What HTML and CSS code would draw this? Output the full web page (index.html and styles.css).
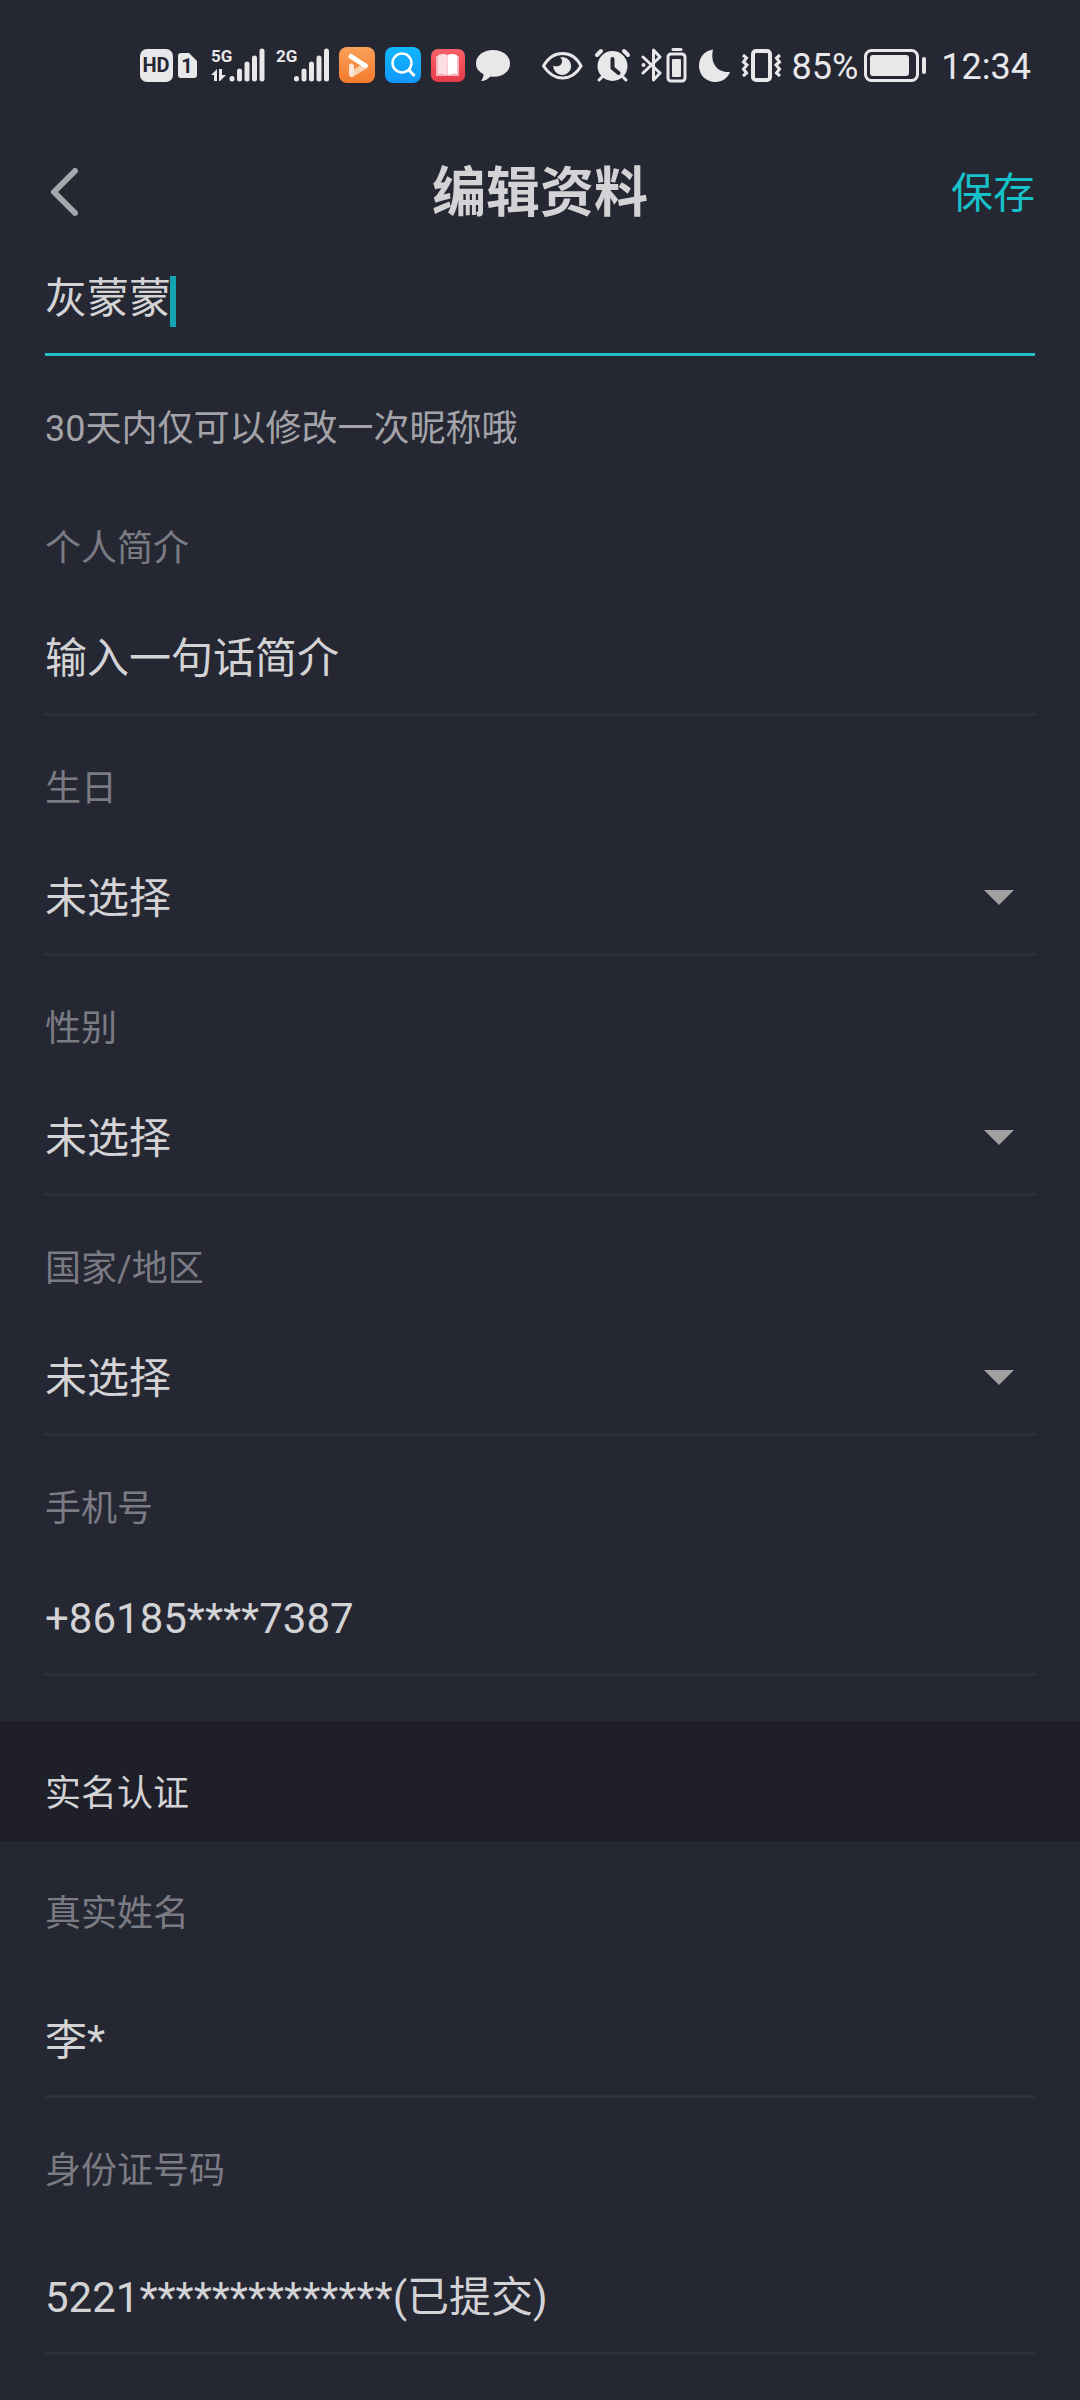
FILE: index.html
```
<!DOCTYPE html>
<html lang="zh-CN">
<head>
    <meta charset="UTF-8">
    <meta name="viewport" content="width=device-width, initial-scale=1.0">
    <title>编辑资料</title>
    <link rel="stylesheet" href="styles.css">
</head>
<body>

    <!-- 状态栏 -->
    <div class="status-bar">
        <div class="status-group">
            <svg width="58" height="36" viewBox="0 0 58 36">
                <rect x="0" y="2" width="33" height="33" rx="7" fill="#e8e8ea"/>
                <text class="status-hd" x="16" y="25" text-anchor="middle">HD</text>
                <path d="M41 6h8l8 8v14a3 3 0 0 1-3 3H41a3 3 0 0 1-3-3V9a3 3 0 0 1 3-3z" fill="#e8e8ea"/>
                <text class="status-hd" x="47" y="26" text-anchor="middle">1</text>
            </svg>
            <svg width="58" height="36" viewBox="0 0 58 36" fill="#e8e8ea">
                <text class="status-net" x="3" y="15">5G</text>
                <path d="M3 28l6-6v12H6v-6zM11 22h3v6h4l-6 6h-1z"/>
                <g stroke="#e8e8ea" stroke-width="5" stroke-linecap="round">
                    <path d="M24 31.500v.5M31.500 24v8M39 17v15M46.500 11v21M54 4v28"/>
                </g>
            </svg>
            <svg width="53" height="36" viewBox="0 0 53 36" fill="#e8e8ea">
                <text class="status-net" x="0" y="15">2G</text>
                <g stroke="#e8e8ea" stroke-width="5" stroke-linecap="round">
                    <path d="M20.500 31.500v.5M28 24v8M35.500 17v15M43 11v21M50.500 4v28"/>
                </g>
            </svg>
            <svg width="36" height="36" viewBox="0 0 36 36">
                <defs>
                    <linearGradient id="orange" x1="0" y1="0" x2="0" y2="1">
                        <stop offset="0" stop-color="#f9a05a"/>
                        <stop offset="1" stop-color="#f47a2c"/>
                    </linearGradient>
                </defs>
                <rect width="36" height="36" rx="8" fill="url(#orange)"/>
                <path d="M13 27L26 19" stroke="#fbd0ae" stroke-width="6" stroke-linecap="round"/>
                <path d="M12.500 19v8" stroke="#fde6d6" stroke-width="5" stroke-linecap="round"/>
                <path d="M12 9.500L26 18.500" stroke="#fff" stroke-width="5" stroke-linecap="round"/>
            </svg>
            <svg width="36" height="36" viewBox="0 0 36 36" fill="none" stroke="#fff">
                <defs>
                    <linearGradient id="blue" x1="0" y1="0" x2="0" y2="1">
                        <stop offset="0" stop-color="#12b8fd"/>
                        <stop offset="1" stop-color="#0f97fb"/>
                    </linearGradient>
                </defs>
                <rect width="36" height="36" rx="8" fill="url(#blue)" stroke="none"/>
                <circle cx="17" cy="16" r="9.500" stroke-width="2.500"/>
                <path d="M23.500 22.500l6 6.500" stroke-width="3"/>
            </svg>
            <svg width="34" height="36" viewBox="0 0 34 36">
                <defs>
                    <linearGradient id="red" x1="0" y1="0" x2="0" y2="1">
                        <stop offset="0" stop-color="#f76068"/>
                        <stop offset="1" stop-color="#e63c47"/>
                    </linearGradient>
                </defs>
                <rect y="2" width="34" height="33" rx="7" fill="url(#red)"/>
                <path d="M5 9h2v18h9v2H5zM28 9h-2v18h-9v2h11z" fill="#f9b4bd"/>
                <path d="M7 8q6-2 9.500 0v20.500Q13 26 7 27z" fill="#fbdde4"/>
                <path d="M26 8q-6-2-9.500 0v20.500Q20 26 26 27z" fill="#fff"/>
            </svg>
            <svg width="36" height="36" viewBox="0 0 36 36">
                <path d="M18 3C8.500 3 1 8.500 1 16.500c0 5 3 8.500 7.500 10.500 0 3-1 5-2.500 7 4 0 7-2 9.500-4.500C26 31 35 25.500 35 16.500 35 8.500 27.500 3 18 3z" fill="#e8e8ea"/>
            </svg>
        </div>
        <div class="status-group">
            <svg width="42" height="36" viewBox="0 0 42 36" fill="none" stroke="#e8e8ea">
                <path d="M2.500 19C7 11 13 6.500 21.500 6.500S36 11 40 19C36 26 30 31 21.500 31S7 26 2.500 19z" stroke-width="3"/>
                <path d="M22 10a9 9 0 1 1-9.800 8.500c3 2 8.800.5 8.800-4 0-2-.5-3-2-4z" fill="#e8e8ea" stroke="none"/>
            </svg>
            <svg width="38" height="36" viewBox="0 0 38 36" fill="none" stroke="#e8e8ea" stroke-width="4" stroke-linecap="round">
                <circle cx="19.500" cy="19" r="15" fill="#e8e8ea" stroke="none"/>
                <path d="M4 8l4-4M31 4l4 4"/>
                <path d="M9 30l-3 3M30 30l3 3" stroke-width="3"/>
                <path d="M19.500 12v9l6 5" stroke="#252732" stroke-linejoin="round"/>
            </svg>
            <svg width="46" height="36" viewBox="0 0 46 36" fill="none" stroke="#e8e8ea" stroke-width="3" stroke-linecap="round" stroke-linejoin="round">
                <path d="M2 10l17 16-6.500 7V3L19 10 2 26"/>
                <circle cx="2.500" cy="18" r="1" stroke-width="2"/>
                <rect x="27" y="7" width="17" height="27" rx="3"/>
                <rect x="31" y="12" width="9" height="18" rx="1" fill="#e8e8ea" stroke="none"/>
                <path d="M32 2.500h8"/>
            </svg>
            <svg width="34" height="36" viewBox="0 0 34 36">
                <path d="M16 2.500C13 16 20 26 33 25c-2 6-8 10-14.500 10C9 35 2 28 2 19 2 10 8 3.500 16 2.500z" fill="#e8e8ea"/>
            </svg>
            <svg width="41" height="36" viewBox="0 0 41 36" fill="none" stroke="#e8e8ea" stroke-width="4">
                <rect x="12" y="4" width="17" height="29" rx="3"/>
                <path d="M2 8l3.500 3-3 4 3.500 3-3.500 4 3 4L2 29M39 8l-3.500 3 3 4-3.500 3 3.500 4-3 4 3.500 3" stroke-width="3"/>
            </svg>
            <div class="battery">
                <span>85%</span>
                <svg width="63" height="36" viewBox="0 0 63 36">
                    <rect x="1.500" y="3.500" width="52" height="30" rx="6" fill="none" stroke="#e8e8ea" stroke-width="3"/>
                    <rect x="6" y="8" width="39" height="21" rx="3" fill="#e8e8ea"/>
                    <rect x="58" y="10" width="4" height="17" rx="2" fill="#e8e8ea"/>
                </svg>
            </div>
            <time class="clock">12:34</time>
        </div>
    </div>

    <!-- 标题栏 -->
    <header class="header">
        <button type="button" class="back" aria-label="返回">
            <svg width="30" height="50" viewBox="0 0 30 50" fill="none" stroke="#a6a7ad" stroke-width="6" stroke-linecap="round" stroke-linejoin="round">
                <path d="M25 4L4 25l21 21"/>
            </svg>
        </button>
        <h1>编辑资料</h1>
        <button type="submit" class="save" form="profile">保存</button>
    </header>

    <form id="profile">
        <!-- 基本资料 -->
        <div class="fields">
            <div class="control active">
                <input type="text" id="nickname" value="灰蒙蒙" aria-label="昵称" aria-describedby="nickname-hint">
                <span class="caret"></span>
            </div>
            <p class="hint" id="nickname-hint">30天内仅可以修改一次昵称哦</p>

            <label for="intro">个人简介</label>
            <div class="control">
                <input type="text" id="intro" placeholder="输入一句话简介">
            </div>

            <label for="birthday">生日</label>
            <div class="control dropdown">
                <select id="birthday">
                    <option>未选择</option>
                </select>
            </div>

            <label for="gender">性别</label>
            <div class="control dropdown">
                <select id="gender">
                    <option>未选择</option>
                    <option>男</option>
                    <option>女</option>
                </select>
            </div>

            <label for="region">国家/地区</label>
            <div class="control dropdown">
                <select id="region">
                    <option>未选择</option>
                </select>
            </div>

            <label for="phone">手机号</label>
            <div class="control">
                <input type="text" id="phone" value="+86185****7387" readonly>
            </div>
        </div>

        <!-- 实名认证 -->
        <h2>实名认证</h2>
        <div class="fields verified">
            <label for="realname">真实姓名</label>
            <div class="control">
                <input type="text" id="realname" value="李*" readonly>
            </div>

            <label for="idcard">身份证号码</label>
            <div class="control">
                <input type="text" id="idcard" value="5221**************(已提交)" readonly>
            </div>
        </div>
    </form>

</body>
</html>
```
FILE: styles.css
```
* {
    margin: 0;
    padding: 0;
    box-sizing: border-box;
}

body {
    font-family: Roboto, "Noto Sans CJK SC", sans-serif;
    font-size: 36px;
    background-color: #252732;
    color: #d3d3d6;
    min-height: 100vh;
}

button, input, select {
    font: inherit;
    color: inherit;
    background: none;
    border: none;
    outline: none;
}

/* 状态栏 */
.status-bar {
    display: flex;
    justify-content: space-between;
    align-items: center;
    height: 128px;
    padding: 2px 49px 0 140px;
    color: #e8e8ea;
}

.status-group {
    display: flex;
    align-items: center;
    gap: 10px;
}

.battery {
    display: flex;
    align-items: center;
    gap: 6px;
}

.battery span, .clock {
    padding-top: 4px;
    line-height: 36px;
}

.clock {
    margin-left: 4px;
}

.status-hd, .status-net {
    font-family: "Liberation Sans Narrow", Roboto, sans-serif;
    font-weight: bold;
}

.status-hd {
    font-size: 20px;
    fill: #252732;
}

.status-net {
    font-size: 17px;
}

/* 标题栏 */
.header {
    display: grid;
    grid-template-columns: 1fr auto 1fr;
    align-items: center;
    height: 128px;
    padding: 0 45px;
}

.header h1 {
    padding-top: 4px;
    font-size: 54px;
    line-height: 80px;
}

.back {
    justify-self: start;
    padding: 0 5px;
    cursor: pointer;
}

.back svg {
    display: block;
}

.save {
    justify-self: end;
    font-size: 42px;
    line-height: 80px;
    padding-top: 4px;
    color: #16c2ca;
    cursor: pointer;
}

/* 表单 */
.fields {
    padding: 0 45px;
}

label, .hint {
    display: block;
    line-height: 60px;
}

label {
    padding: 43px 0 37px;
    color: #7b7b84;
}

.hint {
    padding: 43px 0 17px;
    color: #a3a3a9;
}

.verified label {
    padding-bottom: 54px;
}

.control {
    position: relative;
    height: 100px;
    border-bottom: 3px solid #2f313c;
}

.control input, .control select {
    display: block;
    width: 100%;
    height: 86px;
    font-size: 42px;
    line-height: 86px;
    appearance: none;
}

.control input::placeholder {
    color: inherit;
    opacity: 1;
}

.control.active {
    border-color: #22bfcb;
}

/* 昵称后面的光标 */
.caret {
    position: absolute;
    left: 125px;
    top: 20px;
    width: 6px;
    height: 51px;
    background-color: #14a5b2;
}

/* 下拉箭头 */
.dropdown::after {
    content: "";
    position: absolute;
    right: 21px;
    top: 34px;
    border: 15px solid transparent;
    border-top-color: #a0a0a0;
    border-bottom: none;
    pointer-events: none;
}

h2 {
    margin-top: 45px;
    padding: 43px 45px 17px;
    font-size: 36px;
    font-weight: normal;
    line-height: 60px;
    background-color: #1f1f29;
}
```
